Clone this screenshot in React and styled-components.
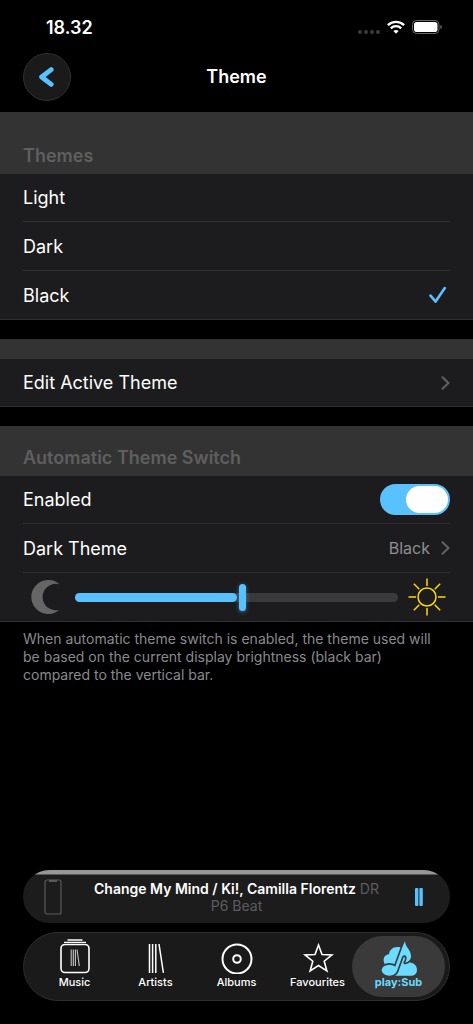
import React, { useState } from "react";
import styled, { createGlobalStyle } from "styled-components";

const GlobalStyle = createGlobalStyle`
  * {
    box-sizing: border-box;
  }

  body {
    margin: 0;
    background: #000;
    color: #fff;
    font-family: Inter, "Liberation Sans", sans-serif;
  }

  button, input {
    font: inherit;
    color: inherit;
    margin: 0;
  }
`;

const Screen = styled.div`
  display: flex;
  flex-direction: column;
  min-height: 100vh;
`;

const StatusBar = styled.div`
  display: flex;
  align-items: center;
  justify-content: space-between;
  height: 52px;
  padding: 2px 31px 0 46px;
`;

const Clock = styled.span`
  font-size: 18px;
  font-weight: 600;
`;

const StatusIcons = styled.div`
  display: flex;
  align-items: center;
  gap: 7px;
`;

const NavBar = styled.header`
  display: grid;
  grid-template-columns: 48px 1fr 48px;
  align-items: center;
  height: 60px;
  padding: 0 23px 11px;
`;

const BackButton = styled.button`
  display: grid;
  place-items: center;
  width: 48px;
  height: 48px;
  padding: 0;
  border: 1px solid #303030;
  border-radius: 50%;
  background: #1a1a1a;
  cursor: pointer;
`;

const PageTitle = styled.h1`
  margin: 0;
  font-size: 18px;
  font-weight: 600;
  text-align: center;
`;

const Section = styled.section`
  margin-bottom: 19px;
`;

const SectionHeader = styled.h2`
  display: flex;
  align-items: flex-end;
  height: ${({ $height }) => $height}px;
  margin: 0;
  padding: 0 23px 7px;
  background: #333;
  color: #5f5f5f;
  font-size: 18px;
  font-weight: 600;
  line-height: 22px;
`;

const Rows = styled.div`
  padding: 0 23px;
  background: #1c1c1e;
  border-bottom: 1px solid #303032;
`;

const Row = styled.div`
  display: flex;
  align-items: center;
  justify-content: space-between;
  width: 100%;
  height: 47px;
  font-size: 18px;

  & + & {
    height: 49px;
    border-top: 1px solid #303032;
  }
`;

const LinkRow = styled(Row)`
  color: #fff;
  text-decoration: none;
`;

const HiddenRadio = styled.input`
  appearance: none;
  width: 0;
  height: 0;
`;

const RowLabel = styled.span`
  flex: 1;
`;

const RowValue = styled.span`
  display: flex;
  align-items: center;
  gap: 11px;
  color: #8e8e93;
  font-size: 16px;
`;

const Switch = styled.input`
  appearance: none;
  display: flex;
  justify-content: ${({ checked }) => (checked ? "flex-end" : "flex-start")};
  width: 70px;
  height: 31px;
  padding: 2px;
  border-radius: 16px;
  background: ${({ checked }) => (checked ? "#5ac1ff" : "#3a3a3c")};
  cursor: pointer;

  &::before {
    content: "";
    width: 42px;
    height: 27px;
    border-radius: 14px;
    background: #fff;
  }
`;

const BrightnessRow = styled(Row)`
  gap: 10px;
  padding: 0 4px 0 8px;
`;

const Track = styled.div`
  flex: 1;
  display: grid;
  align-items: center;

  > * {
    grid-area: 1 / 1;
  }
`;

const TrackBase = styled.div`
  height: 9px;
  border-radius: 5px;
  background: #3a3a3d;
`;

const TrackFill = styled.div`
  height: 9px;
  border-radius: 5px;
  background: #5ac1ff;
`;

const Threshold = styled.input`
  appearance: none;
  width: 100%;
  height: 27px;
  background: transparent;

  &::-webkit-slider-thumb {
    appearance: none;
    width: 7px;
    height: 27px;
    border-radius: 4px;
    background: #5ac1ff;
    box-shadow: 0 1px 4px rgba(90, 193, 255, 0.5);
  }
`;

const Footnote = styled.p`
  margin: 8px 23px 0;
  color: #8a8a8e;
  font-size: 14px;
  line-height: 18px;
`;

const Dock = styled.div`
  display: flex;
  flex-direction: column;
  gap: 9px;
  margin-top: auto;
  padding: 16px 23px 23px;
`;

const Player = styled.div`
  display: grid;
  grid-template-columns: 20px 1fr 20px;
  align-items: center;
  height: 53px;
  padding: 0 21px;
  border-radius: 27px;
  overflow: hidden;
  background: linear-gradient(#979797 4px, #1c1c1c 5px);
`;

const NowPlaying = styled.div`
  min-width: 0;
  font-size: 14px;
  line-height: 17px;
  text-align: center;
  white-space: nowrap;
  color: #5c5c5c;
`;

const SongTitle = styled.strong`
  color: #fff;
  font-weight: 600;
`;

const IconButton = styled.button`
  display: grid;
  place-items: center;
  padding: 0;
  border: 0;
  background: none;
  cursor: pointer;
`;

const TabBar = styled.nav`
  display: grid;
  grid-template-columns: repeat(5, 1fr);
  height: 69px;
  padding: 3px 10px;
  border: 1px solid #2e2e2e;
  border-radius: 35px;
  background: #1a1a1a;
`;

const Tab = styled.a`
  display: flex;
  flex-direction: column;
  align-items: center;
  gap: 1px;
  margin: 0 -6px;
  padding-top: 3px;
  border-radius: 31px;
  background: ${({ $active }) => ($active ? "#3a3a3a" : "transparent")};
  color: ${({ $active }) => ($active ? "#6bdbff" : "#fff")};
  font-size: 11px;
  font-weight: ${({ $active }) => ($active ? 700 : 500)};
  line-height: 14px;
  text-decoration: none;
`;

const SignalIcon = () => (
  <svg width="22" height="14" viewBox="0 0 22 14" fill="#3c3c3c">
    <circle cx="2" cy="12" r="2" />
    <circle cx="8" cy="12" r="2" />
    <circle cx="14" cy="12" r="2" />
    <circle cx="20" cy="12" r="2" />
  </svg>
);

const WifiIcon = () => (
  <svg width="18" height="14" viewBox="0 0 18 14" fill="none" stroke="#fff" strokeWidth="2.4">
    <path d="M0.9 5.2a11.6 11.6 0 0 1 16.2 0" />
    <path d="M3.8 8.3a7.4 7.4 0 0 1 10.4 0" />
    <path d="M9 13.8L6.4 11.1a3.8 3.8 0 0 1 5.2 0z" fill="#fff" stroke="none" />
  </svg>
);

const BatteryIcon = () => (
  <svg width="30" height="14" viewBox="0 0 30 14">
    <rect x="0.5" y="0.5" width="26.5" height="13" rx="4" fill="none" stroke="#6a6468" />
    <rect x="2" y="2" width="23.5" height="10" rx="2.8" fill="#fff" />
    <path d="M28.3 5v4c1-.4 1.6-1.2 1.6-2s-.6-1.6-1.6-2z" fill="#6a6468" />
  </svg>
);

const BackIcon = () => (
  <svg width="18" height="20" viewBox="0 0 18 20" fill="none" stroke="#5ac1ff" strokeWidth="4.8" strokeLinecap="round" strokeLinejoin="round">
    <path d="M13.2 2.6L3.6 10l9.6 7.4" />
  </svg>
);

const CheckIcon = () => (
  <svg width="21" height="18" viewBox="0 0 21 18" fill="none" stroke="#5ac1ff" strokeWidth="2.6" strokeLinecap="round" strokeLinejoin="round">
    <path d="M1.5 9.6L6.6 15.6L15.8 2" />
  </svg>
);

const ChevronIcon = () => (
  <svg width="9" height="14" viewBox="0 0 9 14" fill="none" stroke="#626266" strokeWidth="2" strokeLinecap="round" strokeLinejoin="round">
    <path d="M1.5 1.2L7.5 7L1.5 12.8" />
  </svg>
);

const MoonIcon = () => (
  <svg width="34" height="34" viewBox="0 0 34 34" fill="#666">
    <path d="M28.5 4.2A17 17 0 1 0 28.5 29.8A13.3 13.3 0 1 1 28.5 4.2z" />
  </svg>
);

const SunIcon = () => (
  <svg width="38" height="38" viewBox="0 0 38 38" fill="none" stroke="#ffd60a" strokeWidth="1.5">
    <circle cx="19" cy="19" r="9" />
    <path d="M19 0.5v7.5M19 30v7.5M0.5 19H8M30 19h7.5M5.8 5.8l5.5 5.5M26.7 26.7l5.5 5.5M32.2 5.8l-5.5 5.5M11.3 26.7l-5.5 5.5" />
  </svg>
);

const PhoneIcon = () => (
  <svg width="18" height="36" viewBox="0 0 18 36" fill="none" stroke="#5a5a5a" strokeWidth="1.2">
    <rect x="1" y="1" width="16" height="34" rx="2" />
    <path d="M5 2h8" strokeWidth="2" />
  </svg>
);

const PauseIcon = () => (
  <svg width="8" height="18" viewBox="0 0 8 18" fill="#5ac1ff">
    <rect width="3.4" height="18" rx="1" />
    <rect x="4.4" width="3.4" height="18" rx="1" />
  </svg>
);

const MusicIcon = () => (
  <svg width="30" height="35" viewBox="0 0 30 35" fill="none" stroke="#fff" strokeWidth="1.6">
    <rect x="1" y="5.5" width="28" height="28" rx="4" />
    <path d="M4 3.3h22M7.5 1h15" strokeWidth="1.3" />
    <path d="M11.2 10.5v16.5M13.3 10.5v16.5M15.4 10.5v16.5M17 10.5l2.3 16.5" stroke="#c4c4c4" strokeWidth="1.1" />
  </svg>
);

const ArtistsIcon = () => (
  <svg width="30" height="35" viewBox="0 0 30 35" fill="none" stroke="#fff" strokeWidth="1.5">
    <path d="M8.5 5v29M11.6 5v29M14.8 5v29M18 5l4.400 28.800" />
  </svg>
);

const AlbumsIcon = () => (
  <svg width="32" height="35" viewBox="0 0 32 35" fill="none" stroke="#fff" strokeWidth="2">
    <circle cx="16" cy="20" r="14.5" />
    <circle cx="16" cy="20" r="3.8" />
  </svg>
);

const StarIcon = () => (
  <svg width="32" height="35" viewBox="0 0 32 35" fill="none" stroke="#fff" strokeWidth="1.6">
    <path d="M16.5 6L20 15.5L30 15.9L22.2 22.2L24.9 32L16.5 26.5L8.1 32L10.8 22.2L3 15.9L13 15.5z" />
  </svg>
);

// cloud behind, then the note, outlined in the tab's own grey
const noteShapes = (
  <>
    <ellipse cx="116" cy="120.5" rx="23" ry="16.5" />
    <path d="M163 33C164 52 181 60 181 78C181 90 173 96 163 98C169 90 170 79 163 76C158 74 155 78 153 84L139 122L131 118L154 54C157 46 160 42 163 33z" />
  </>
);

const CloudNoteIcon = () => (
  <svg width="38" height="35" viewBox="88 27 114 105" overflow="visible" fill="#6bdbff">
    <path d="M101 100C95 86 102 74 115 73C116 58 130 47 149 52L160 80L180 98C192 100 199 108 199 119C199 131 191 137.5 180 137.5H110z" />
    <g fill="#3a3a3a" stroke="#3a3a3a" strokeWidth="10" strokeLinejoin="round">
      {noteShapes}
    </g>
    {noteShapes}
  </svg>
);

const themes = ["Light", "Dark", "Black"];

const tabs = [
  { name: "Music", Icon: MusicIcon },
  { name: "Artists", Icon: ArtistsIcon },
  { name: "Albums", Icon: AlbumsIcon },
  { name: "Favourites", Icon: StarIcon },
  { name: "play:Sub", Icon: CloudNoteIcon },
];

const App = () => {
  const [theme, setTheme] = useState("Black");
  const [enabled, setEnabled] = useState(true);
  const [threshold, setThreshold] = useState(52);
  const brightness = 50;

  return (
    <>
      <GlobalStyle />
      <Screen>
        <StatusBar>
          <Clock>18.32</Clock>
          <StatusIcons>
            <SignalIcon />
            <WifiIcon />
            <BatteryIcon />
          </StatusIcons>
        </StatusBar>

        <NavBar>
          <BackButton aria-label="Back">
            <BackIcon />
          </BackButton>
          <PageTitle>Theme</PageTitle>
        </NavBar>

        <Section>
          <SectionHeader $height={62}>Themes</SectionHeader>
          <Rows>
            {themes.map((name) => (
              <Row as="label" key={name}>
                <RowLabel>{name}</RowLabel>
                <HiddenRadio
                  type="radio"
                  name="theme"
                  checked={theme === name}
                  onChange={() => setTheme(name)}
                />
                {theme === name && <CheckIcon />}
              </Row>
            ))}
          </Rows>
        </Section>

        <Section>
          <SectionHeader as="div" $height={20} />
          <Rows>
            <LinkRow as="a" href="#edit">
              Edit Active Theme
              <ChevronIcon />
            </LinkRow>
          </Rows>
        </Section>

        <section>
          <SectionHeader $height={50}>Automatic Theme Switch</SectionHeader>
          <Rows>
            <Row as="label">
              Enabled
              <Switch
                type="checkbox"
                checked={enabled}
                onChange={() => setEnabled(!enabled)}
              />
            </Row>
            <LinkRow as="a" href="#dark-theme">
              Dark Theme
              <RowValue>
                Black
                <ChevronIcon />
              </RowValue>
            </LinkRow>
            <BrightnessRow>
              <MoonIcon />
              <Track>
                <TrackBase />
                <TrackFill style={{ width: `${brightness}%` }} />
                <Threshold
                  type="range"
                  aria-label="Brightness threshold"
                  value={threshold}
                  onChange={(e) => setThreshold(Number(e.target.value))}
                />
              </Track>
              <SunIcon />
            </BrightnessRow>
          </Rows>
          <Footnote>
            When automatic theme switch is enabled, the theme used will be based
            on the current display brightness (black bar) compared to the
            vertical bar.
          </Footnote>
        </section>

        <Dock>
          <Player>
            <PhoneIcon />
            <NowPlaying>
              <div>
                <SongTitle>Change My Mind / Ki!, Camilla Florentz</SongTitle> DR
              </div>
              <div>P6 Beat</div>
            </NowPlaying>
            <IconButton aria-label="Pause">
              <PauseIcon />
            </IconButton>
          </Player>

          <TabBar>
            {tabs.map(({ name, Icon }) => (
              <Tab key={name} href={`#${name}`} $active={name === "play:Sub"}>
                <Icon />
                {name}
              </Tab>
            ))}
          </TabBar>
        </Dock>
      </Screen>
    </>
  );
};

export default App;
